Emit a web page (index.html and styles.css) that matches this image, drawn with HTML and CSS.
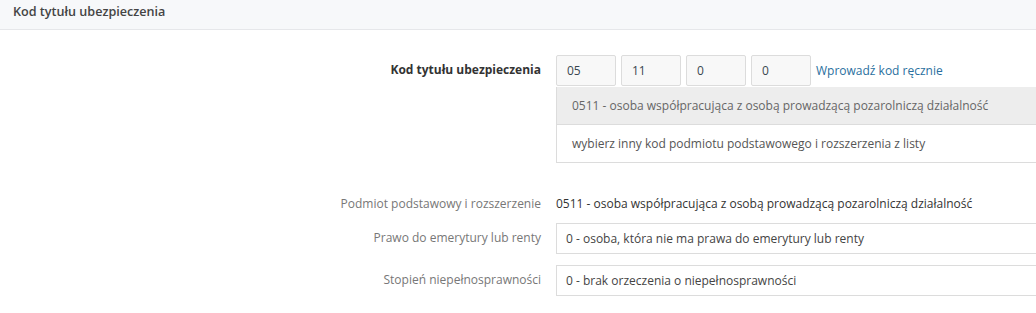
FILE: index.html
```html
<!DOCTYPE html>
<html lang="pl">
<head>
    <meta charset="UTF-8">
    <title>Kod tytułu ubezpieczenia</title>
    <link rel="stylesheet" href="styles.css">
</head>
<body>
    <div class="panel">
        <div class="panel-heading">Kod tytułu ubezpieczenia</div>
        <div class="panel-body">
            <div class="form-row code-row">
                <label class="label strong">Kod tytułu ubezpieczenia</label>
                <div class="field">
                    <div class="code-inputs">
                        <input class="code" type="text" value="05">
                        <input class="code" type="text" value="11">
                        <input class="code" type="text" value="0">
                        <input class="code" type="text" value="0">
                        <a class="manual" href="#">Wprowadź kod ręcznie</a>
                    </div>
                    <ul class="dropdown">
                        <li class="active">0511 - osoba współpracująca z osobą prowadzącą pozarolniczą działalność</li>
                        <li>wybierz inny kod podmiotu podstawowego i rozszerzenia z listy</li>
                    </ul>
                </div>
            </div>

            <div class="form-row static-row">
                <label class="label">Podmiot podstawowy i rozszerzenie</label>
                <div class="field value">0511 - osoba współpracująca z osobą prowadzącą pozarolniczą działalność</div>
            </div>

            <div class="form-row">
                <label class="label">Prawo do emerytury lub renty</label>
                <div class="field">
                    <div class="select">0 - osoba, która nie ma prawa do emerytury lub renty</div>
                </div>
            </div>

            <div class="form-row">
                <label class="label">Stopień niepełnosprawności</label>
                <div class="field">
                    <div class="select">0 - brak orzeczenia o niepełnosprawności</div>
                </div>
            </div>
        </div>
    </div>
</body>
</html>
```

FILE: styles.css
```css
body {
    font-family: 'Open Sans', sans-serif;
    font-size: 12px;
    margin: 0;
    padding: 0;
    background-color: #fff;
    color: #333;
    overflow: hidden;
}

.panel-heading {
    height: 30px;
    box-sizing: border-box;
    padding: 3px 13px 0;
    background-color: #f7f8fa;
    border-bottom: 1px solid #e6e7ea;
    font-size: 12.6px;
    font-weight: 600;
    color: #444;
}

.panel-body {
    padding-top: 25px;
}

.form-row {
    display: grid;
    grid-template-columns: 541px 1fr;
    column-gap: 15px;
    align-items: start;
    margin-bottom: 11px;
}

.label {
    text-align: right;
    color: #777;
    line-height: 30px;
}

.label.strong {
    font-weight: 700;
    color: #333;
}

.field {
    min-width: 0;
}

.code-inputs {
    display: flex;
    align-items: center;
    gap: 5px;
}

.code {
    width: 60px;
    height: 31px;
    box-sizing: border-box;
    padding: 0 10px;
    border: 1px solid #dcdcdc;
    border-radius: 2px;
    background-color: #f8f8f8;
    font-family: inherit;
    font-size: 12px;
    color: #3a4650;
}

.manual {
    color: #2a6f9e;
    text-decoration: none;
}

.dropdown {
    list-style: none;
    margin: 1px 0 0;
    padding: 0;
    width: 520px;
    border: 1px solid #dcdcdc;
    border-top: none;
}

.dropdown li {
    height: 37px;
    line-height: 37px;
    padding-left: 15px;
    color: #555;
    border-top: 1px solid #dcdcdc;
}

.dropdown li:first-child {
    border-top: none;
}

.dropdown li.active {
    background-color: #ededed;
    color: #666;
}

.static-row {
    margin-top: 26px;
    margin-bottom: 4px;
}

.static-row .label,
.value {
    line-height: 30px;
}

.value {
    color: #333;
}

.select {
    width: 520px;
    height: 31px;
    line-height: 29px;
    box-sizing: border-box;
    padding-left: 9px;
    border: 1px solid #dcdcdc;
    color: #444;
}
```
